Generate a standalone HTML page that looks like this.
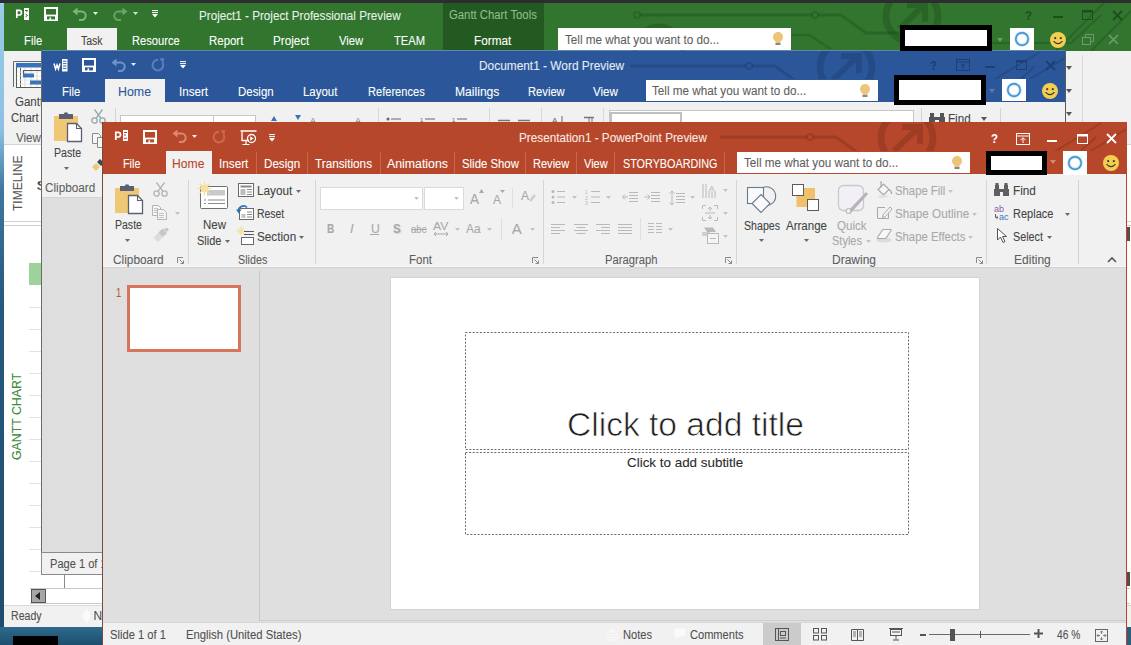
<!DOCTYPE html>
<html><head><meta charset="utf-8"><title>Office</title>
<style>
*{margin:0;padding:0;box-sizing:border-box}
html,body{width:1131px;height:645px;overflow:hidden;background:#2a5877;font-family:"Liberation Sans", sans-serif;font-size:12px;color:#444}
.a{position:absolute;display:block}
.t{position:absolute;white-space:nowrap;line-height:1;-webkit-text-stroke:0.08px currentColor}
</style></head><body>
<div class="a" style="left:0px;top:0px;width:1131px;height:645px;background:linear-gradient(180deg,#9ccbe9 0,#8cc0e3 130px,#3d77a0 190px,#28597e 300px,#1f4c6e 645px);"></div>
<div class="a" style="left:0px;top:0px;width:1131px;height:3px;background:#2d2d30;"></div>
<div class="a" style="left:0px;top:627px;width:103px;height:18px;background:linear-gradient(180deg,#2e6a8c,#1d4f6e);"></div>
<div class="a" style="left:13px;top:636px;width:45px;height:9px;background:#000;"></div>
<div class="a" style="left:1127px;top:627px;width:4px;height:18px;background:#2a5f80;"></div>
<div class="a" style="left:4px;top:3px;width:1127px;height:624px;background:#ffffff;"></div>
<div class="a" style="left:4px;top:3px;width:1127px;height:48px;background:#31752f;"></div>
<div class="a" style="left:443px;top:3px;width:101px;height:48px;background:#235a22;"></div>
<div class="a" style="left:4px;top:51px;width:1127px;height:94px;background:#f1f1f1;"></div>
<div class="a" style="left:4px;top:144px;width:1127px;height:1px;background:#d4d4d4;"></div>
<div class="a" style="left:67px;top:28px;width:50px;height:23px;background:#f1f1f1;"></div>
<svg class="a" style="left:13px;top:61px;" width="29" height="27" viewBox="0 0 29 27"><path d="M0.5 26V0.5H29" fill="none" stroke="#6a6a6a"/><rect x="3.5" y="2.5" width="26" height="24" fill="#fff" stroke="#5a5a5a"/><rect x="3" y="2" width="27" height="4.5" fill="#3a73b8"/><path d="M7.5 7V26M12 7V26M18 7V26M24 7V26" stroke="#d8d8d8"/><path d="M3.5 7V26M7.5 7V26" stroke="#5a5a5a"/><path d="M4 11H29M4 15H29M4 19H29M4 23H29" stroke="#e2e2e2"/><path d="M10.5 13V9.5H29" fill="none" stroke="#5a5a5a" stroke-width="1.2"/><rect x="10" y="12.5" width="11" height="4" fill="#3a73b8"/><rect x="17" y="19.5" width="12" height="4" fill="#3a73b8"/></svg>
<span class="t" style="left:14.70px;top:96.00px;font-size:12px;color:#444444;transform-origin:0 0;transform:scaleX(0.9595);">Gantt</span>
<span class="t" style="left:10.50px;top:111.80px;font-size:12px;color:#444444;transform-origin:0 0;transform:scaleX(0.9430);">Chart</span>
<span class="t" style="left:16.30px;top:131.50px;font-size:12px;color:#5e5e5e;transform-origin:0 0;transform:scaleX(0.9645);">View</span>
<div class="a" style="left:1082px;top:55px;width:1px;height:86px;background:#d8d8d8;"></div>
<svg class="a" style="left:1066px;top:66px;" width="6" height="4" viewBox="0 0 6 4"><path d="M0 0H6L3.0 4Z" fill="#555"/></svg>
<svg class="a" style="left:1066px;top:89px;" width="6" height="4" viewBox="0 0 6 4"><path d="M0 0H6L3.0 4Z" fill="#555"/></svg>
<svg class="a" style="left:1066px;top:112px;" width="6" height="4" viewBox="0 0 6 4"><path d="M0 0H6L3.0 4Z" fill="#555"/></svg>
<div class="a" style="left:4px;top:145px;width:1127px;height:77px;background:#ffffff;"></div>
<span class="t" style="left:10.50px;top:210.70px;font-size:13px;color:#555;transform-origin:0 0;transform:rotate(-90deg) scaleX(0.9240);">TIMELINE</span>
<span class="t" style="left:36.00px;top:180.00px;font-size:12px;color:#444444;transform-origin:0 0;transform:scaleX(1.7500);">S</span>
<div class="a" style="left:4px;top:221px;width:1127px;height:1px;background:#d0d0d0;"></div>
<div class="a" style="left:4px;top:225px;width:1127px;height:1px;background:#d0d0d0;"></div>
<div class="a" style="left:4px;top:226px;width:1127px;height:379px;background:#ffffff;"></div>
<div class="a" style="left:29px;top:263px;width:14px;height:22px;background:#9dd29b;"></div>
<div class="a" style="left:29px;top:307px;width:13px;height:1px;background:#e2e2e2;"></div>
<div class="a" style="left:29px;top:329px;width:13px;height:1px;background:#e2e2e2;"></div>
<div class="a" style="left:29px;top:351px;width:13px;height:1px;background:#e2e2e2;"></div>
<div class="a" style="left:29px;top:373px;width:13px;height:1px;background:#e2e2e2;"></div>
<div class="a" style="left:29px;top:395px;width:13px;height:1px;background:#e2e2e2;"></div>
<div class="a" style="left:29px;top:417px;width:13px;height:1px;background:#e2e2e2;"></div>
<div class="a" style="left:29px;top:439px;width:13px;height:1px;background:#e2e2e2;"></div>
<div class="a" style="left:29px;top:461px;width:13px;height:1px;background:#e2e2e2;"></div>
<div class="a" style="left:29px;top:483px;width:13px;height:1px;background:#e2e2e2;"></div>
<div class="a" style="left:29px;top:505px;width:13px;height:1px;background:#e2e2e2;"></div>
<div class="a" style="left:29px;top:527px;width:13px;height:1px;background:#e2e2e2;"></div>
<div class="a" style="left:29px;top:549px;width:13px;height:1px;background:#e2e2e2;"></div>
<div class="a" style="left:29px;top:571px;width:13px;height:1px;background:#e2e2e2;"></div>
<span class="t" style="left:11.00px;top:460.00px;font-size:12px;color:#3d8a3b;transform-origin:0 0;transform:rotate(-90deg) scaleX(1.0258);">GANTT CHART</span>
<div class="a" style="left:64px;top:574px;width:1px;height:14px;background:#8a8a8a;"></div>
<div class="a" style="left:30px;top:588px;width:1100px;height:16px;background:#ffffff;border-top:1px solid #c9c9c9;border-bottom:1px solid #c9c9c9"></div>
<div class="a" style="left:31px;top:589px;width:15px;height:14px;background:#a6a6a6;border:1px solid #555"></div>
<svg class="a" style="left:35px;top:592px;" width="6" height="8" viewBox="0 0 6 8"><path d="M5 0V8L0 4Z" fill="#222"/></svg>
<div class="a" style="left:4px;top:605px;width:1127px;height:22px;background:#f1f1f1;"></div>
<div class="a" style="left:4px;top:605px;width:1127px;height:1px;background:#d9d9d9;"></div>
<span class="t" style="left:11.40px;top:610.20px;font-size:12px;color:#505050;transform-origin:0 0;transform:scaleX(0.8822);">Ready</span>
<span class="t" style="left:93.60px;top:610.20px;font-size:12px;color:#505050;">N</span>
<svg class="a" style="left:80px;top:607px;" width="12" height="18" viewBox="0 0 12 18"><path d="M7 1L2 9L7 17L11 9Z" fill="#fafafa"/></svg>
<div class="a" style="left:41px;top:50px;width:1025px;height:503px;background:#dedede;"></div>
<div class="a" style="left:41px;top:50px;width:1px;height:525px;background:#6b6b6b;"></div>
<div class="a" style="left:1065px;top:50px;width:1px;height:95px;background:#5a5a5a;"></div>
<div class="a" style="left:41px;top:552px;width:70px;height:23px;background:#f1f1f1;border:1px solid #8a8a8a;border-right:none"></div>
<span class="t" style="left:49.60px;top:557.60px;font-size:12px;color:#505050;transform-origin:0 0;transform:scaleX(0.9221);">Page 1 of 1</span>
<div class="a" style="left:42px;top:50px;width:1023px;height:52px;background:#2b579a;"></div>
<div class="a" style="left:42px;top:50px;width:1023px;height:1px;background:#5f8aa8;"></div>
<div class="a" style="left:42px;top:102px;width:1023px;height:95px;background:#f1f1f1;"></div>
<div class="a" style="left:105px;top:79px;width:60px;height:23px;background:#f1f1f1;"></div>
<div class="a" style="left:42px;top:197px;width:61px;height:1px;background:#d4d4d4;"></div>
<svg class="a" style="left:54px;top:112px;" width="29" height="31" viewBox="0 0 29 31"><rect x="0" y="4" width="24" height="25" fill="#f0c772"/><rect x="5" y="2" width="14" height="5" fill="#5b6074"/><circle cx="12" cy="2.5" r="2.3" fill="#5b6074"/><path d="M13.5 11.5H22.5L27.5 16.5V29.5H13.5Z" fill="#fff" stroke="#5b6074" stroke-width="1.3"/><path d="M22.5 11.5V16.5H27.5" fill="none" stroke="#5b6074" stroke-width="1.1"/></svg>
<span class="t" style="left:53.60px;top:146.70px;font-size:12px;color:#444444;transform-origin:0 0;transform:scaleX(0.8835);">Paste</span>
<svg class="a" style="left:64px;top:167px;" width="5" height="3" viewBox="0 0 5 3"><path d="M0 0H5L2.5 3Z" fill="#6a6a6a"/></svg>
<span class="t" style="left:45.40px;top:182.00px;font-size:12px;color:#5e5e5e;transform-origin:0 0;transform:scaleX(0.9785);">Clipboard</span>
<svg class="a" style="left:91px;top:109px;" width="15" height="15" viewBox="0 0 15 15"><g fill="none" stroke="#98a8a8" stroke-width="1.3"><circle cx="3.5" cy="11.5" r="2.7"/><circle cx="11.5" cy="11.5" r="2.7"/><path d="M5 9.3L11.5 0.5M10 9.3L3.5 0.5"/></g></svg>
<svg class="a" style="left:92px;top:133px;" width="15" height="15" viewBox="0 0 15 15"><g fill="#f6f6f6" stroke="#8a8a8a" stroke-width="1"><path d="M0.5 0.5H6.5L8.5 2.5V10.5H0.5Z"/><path d="M5.5 4.5H11.5L14.5 7.5V14.5H5.5Z"/></g></svg>
<svg class="a" style="left:92px;top:159px;" width="12" height="12" viewBox="0 0 12 12"><path d="M0 8L4 4L8 8L4 12Z" fill="#f0c772"/><path d="M5 3L8 0L12 4L9 7Z" fill="#444"/></svg>
<div class="a" style="left:115px;top:108px;width:1px;height:14px;background:#d4d4d4;"></div>
<div class="a" style="left:120px;top:115px;width:94px;height:10px;background:#fff;border:1px solid #c6c6c6"></div>
<div class="a" style="left:213px;top:115px;width:43px;height:10px;background:#fff;border:1px solid #c6c6c6"></div>
<svg class="a" style="left:268px;top:114px;" width="40" height="8" viewBox="0 0 40 8"><path d="M3 7L6 2L9 7Z" fill="#3a73b8"/><path d="M27 1H33L30 6Z" fill="#3a73b8"/></svg>
<svg class="a" style="left:310px;top:116px;" width="12" height="8" viewBox="0 0 12 8"><text x="0" y="8" font-size="9" fill="#777" font-family="Liberation Sans">A</text></svg>
<svg class="a" style="left:355px;top:116px;" width="12" height="8" viewBox="0 0 12 8"><text x="0" y="8" font-size="9" fill="#777" font-family="Liberation Sans">A</text></svg>
<div class="a" style="left:378px;top:108px;width:1px;height:14px;background:#d8d8d8;"></div>
<div class="a" style="left:489px;top:108px;width:1px;height:14px;background:#d8d8d8;"></div>
<div class="a" style="left:541px;top:108px;width:1px;height:14px;background:#d8d8d8;"></div>
<div class="a" style="left:603px;top:108px;width:1px;height:14px;background:#d8d8d8;"></div>
<svg class="a" style="left:386px;top:117px;" width="16" height="5" viewBox="0 0 16 5"><path d="M5 2H15" stroke="#666"/><circle cx="2" cy="2" r="1.5" fill="#666"/></svg>
<svg class="a" style="left:420px;top:116px;" width="16" height="6" viewBox="0 0 16 6"><path d="M5 3H15" stroke="#666"/><text x="0" y="6" font-size="6" fill="#666" font-family="Liberation Sans">1</text></svg>
<svg class="a" style="left:452px;top:116px;" width="16" height="6" viewBox="0 0 16 6"><path d="M5 3H15" stroke="#666"/><text x="0" y="6" font-size="6" fill="#666" font-family="Liberation Sans">1</text></svg>
<svg class="a" style="left:497px;top:119px;" width="40" height="4" viewBox="0 0 40 4"><path d="M1 1.5H13M21 1.5H33" stroke="#777" stroke-width="1.5"/></svg>
<svg class="a" style="left:552px;top:115px;" width="12" height="8" viewBox="0 0 12 8"><text x="0" y="8" font-size="8" fill="#666" font-family="Liberation Sans">A</text><path d="M10 1V8" stroke="#666"/></svg>
<svg class="a" style="left:583px;top:116px;" width="12" height="7" viewBox="0 0 12 7"><path d="M1 1.5H11" stroke="#777" stroke-width="1.5"/><path d="M6 1V7M9 1V7" stroke="#777"/></svg>
<svg class="a" style="left:900px;top:113px;" width="9" height="6" viewBox="0 0 9 6"><path d="M1 5L4.5 1L8 5Z" fill="#888"/></svg>
<div class="a" style="left:609px;top:110px;width:305px;height:14px;background:#fff;border:1px solid #c6c6c6"></div>
<div class="a" style="left:610px;top:112px;width:72px;height:12px;background:#fff;border:2px solid #c0c0c0"></div>
<div class="a" style="left:921px;top:108px;width:1px;height:14px;background:#d4d4d4;"></div>
<svg class="a" style="left:929px;top:112px;" width="17" height="11" viewBox="0 0 17 11"><g fill="#555"><rect x="0" y="5" width="6" height="6"/><rect x="10" y="5" width="6" height="6"/><rect x="1" y="1" width="4" height="5"/><rect x="11" y="1" width="4" height="5"/><rect x="5" y="5" width="6" height="3"/></g></svg>
<span class="t" style="left:948.00px;top:113.00px;font-size:12px;color:#444444;transform-origin:0 0;transform:scaleX(0.9704);">Find</span>
<div class="a" style="left:1000px;top:108px;width:1px;height:14px;background:#d4d4d4;"></div>
<svg class="a" style="left:981px;top:117px;" width="6" height="4" viewBox="0 0 6 4"><path d="M0 0H6L3.0 4Z" fill="#555"/></svg>
<div class="a" style="left:102px;top:122px;width:1025px;height:523px;background:#dfdfdf;"></div>
<div class="a" style="left:102px;top:122px;width:1px;height:523px;background:#7a4a3c;"></div>
<div class="a" style="left:1126px;top:122px;width:1px;height:523px;background:#b7472a;"></div>
<div class="a" style="left:103px;top:122px;width:1023px;height:52px;background:#b7472a;"></div>
<div class="a" style="left:103px;top:174px;width:1023px;height:93px;background:#f1f1f1;"></div>
<div class="a" style="left:103px;top:266px;width:1023px;height:1px;background:#f8f8f8;"></div>
<div class="a" style="left:103px;top:267px;width:1023px;height:1px;background:#d2d2d2;"></div>
<div class="a" style="left:166px;top:151px;width:46px;height:23px;background:#f1f1f1;"></div>
<span class="t" style="left:199.00px;top:9.50px;font-size:12px;color:#eaf2ea;transform-origin:0 0;transform:scaleX(0.9723);">Project1 - Project Professional Preview</span>
<span class="t" style="left:449.00px;top:9.00px;font-size:12px;color:#8fbf8c;transform-origin:0 0;transform:scaleX(0.9424);">Gantt Chart Tools</span>
<span class="t" style="left:24.00px;top:34.50px;font-size:12px;color:#ffffff;transform-origin:0 0;transform:scaleX(0.9409);">File</span>
<span class="t" style="left:80.50px;top:34.50px;font-size:12px;color:#444444;transform-origin:0 0;transform:scaleX(0.8764);">Task</span>
<span class="t" style="left:132.00px;top:34.50px;font-size:12px;color:#ffffff;transform-origin:0 0;transform:scaleX(0.9287);">Resource</span>
<span class="t" style="left:209.00px;top:34.50px;font-size:12px;color:#ffffff;transform-origin:0 0;transform:scaleX(0.9541);">Report</span>
<span class="t" style="left:273.00px;top:34.50px;font-size:12px;color:#ffffff;transform-origin:0 0;transform:scaleX(0.9733);">Project</span>
<span class="t" style="left:339.00px;top:34.50px;font-size:12px;color:#ffffff;transform-origin:0 0;transform:scaleX(0.9377);">View</span>
<span class="t" style="left:393.50px;top:34.50px;font-size:12px;color:#ffffff;transform-origin:0 0;transform:scaleX(0.9329);">TEAM</span>
<span class="t" style="left:474.00px;top:34.50px;font-size:12px;color:#ffffff;transform-origin:0 0;transform:scaleX(0.9827);">Format</span>
<span class="t" style="left:479.00px;top:59.50px;font-size:12px;color:#e6ecf5;transform-origin:0 0;transform:scaleX(0.9903);">Document1 - Word Preview</span>
<span class="t" style="left:61.80px;top:86.00px;font-size:12px;color:#ffffff;transform-origin:0 0;transform:scaleX(0.9409);">File</span>
<span class="t" style="left:118.00px;top:86.00px;font-size:12px;color:#2b579a;transform-origin:0 0;transform:scaleX(1.0329);">Home</span>
<span class="t" style="left:179.03px;top:86.00px;font-size:12px;color:#ffffff;transform-origin:0 0;transform:scaleX(0.9671);">Insert</span>
<span class="t" style="left:238.40px;top:86.00px;font-size:12px;color:#ffffff;transform-origin:0 0;transform:scaleX(0.9542);">Design</span>
<span class="t" style="left:303.00px;top:86.00px;font-size:12px;color:#ffffff;transform-origin:0 0;transform:scaleX(0.9538);">Layout</span>
<span class="t" style="left:368.30px;top:86.00px;font-size:12px;color:#ffffff;transform-origin:0 0;transform:scaleX(0.9240);">References</span>
<span class="t" style="left:454.60px;top:86.00px;font-size:12px;color:#ffffff;transform-origin:0 0;transform:scaleX(1.0087);">Mailings</span>
<span class="t" style="left:528.00px;top:86.00px;font-size:12px;color:#ffffff;transform-origin:0 0;transform:scaleX(0.9325);">Review</span>
<span class="t" style="left:592.70px;top:86.00px;font-size:12px;color:#ffffff;transform-origin:0 0;transform:scaleX(0.9645);">View</span>
<span class="t" style="left:518.80px;top:131.50px;font-size:12px;color:#fbeae5;transform-origin:0 0;transform:scaleX(0.9780);">Presentation1 - PowerPoint Preview</span>
<span class="t" style="left:123.30px;top:158.30px;font-size:12px;color:#ffffff;transform-origin:0 0;transform:scaleX(0.9002);">File</span>
<span class="t" style="left:172.00px;top:158.30px;font-size:12px;color:#b7472a;transform-origin:0 0;transform:scaleX(1.0144);">Home</span>
<span class="t" style="left:219.02px;top:158.30px;font-size:12px;color:#ffffff;transform-origin:0 0;transform:scaleX(0.9772);">Insert</span>
<span class="t" style="left:264.00px;top:158.30px;font-size:12px;color:#ffffff;transform-origin:0 0;transform:scaleX(0.9678);">Design</span>
<span class="t" style="left:315.00px;top:158.30px;font-size:12px;color:#ffffff;transform-origin:0 0;transform:scaleX(0.9787);">Transitions</span>
<span class="t" style="left:387.00px;top:158.30px;font-size:12px;color:#ffffff;transform-origin:0 0;transform:scaleX(1.0259);">Animations</span>
<span class="t" style="left:461.60px;top:158.30px;font-size:12px;color:#ffffff;transform-origin:0 0;transform:scaleX(0.9475);">Slide Show</span>
<span class="t" style="left:533.00px;top:158.30px;font-size:12px;color:#ffffff;transform-origin:0 0;transform:scaleX(0.9199);">Review</span>
<span class="t" style="left:584.00px;top:158.30px;font-size:12px;color:#ffffff;transform-origin:0 0;transform:scaleX(0.9186);">View</span>
<span class="t" style="left:622.50px;top:158.30px;font-size:12px;color:#ffffff;transform-origin:0 0;transform:scaleX(0.9008);">STORYBOARDING</span>
<div class="a" style="left:256px;top:152px;width:1px;height:22px;background:rgba(255,255,255,0.18);"></div>
<div class="a" style="left:307px;top:152px;width:1px;height:22px;background:rgba(255,255,255,0.18);"></div>
<div class="a" style="left:380px;top:152px;width:1px;height:22px;background:rgba(255,255,255,0.18);"></div>
<div class="a" style="left:454px;top:152px;width:1px;height:22px;background:rgba(255,255,255,0.18);"></div>
<div class="a" style="left:525px;top:152px;width:1px;height:22px;background:rgba(255,255,255,0.18);"></div>
<div class="a" style="left:576px;top:152px;width:1px;height:22px;background:rgba(255,255,255,0.18);"></div>
<div class="a" style="left:614px;top:152px;width:1px;height:22px;background:rgba(255,255,255,0.18);"></div>
<div class="a" style="left:724px;top:152px;width:1px;height:22px;background:rgba(255,255,255,0.18);"></div>
<svg class="a" style="left:544px;top:3px;" width="587" height="48" viewBox="0 0 587 48"><g transform="translate(0 0)"><g fill="none" stroke="rgba(0,0,0,0.13)"><path d="M96 12H268M274 12H297L322 30H437" stroke-width="3"/><circle cx="115" cy="47" r="24" stroke-width="5"/><path d="M243 32H265L287 46" stroke-width="2.5"/><circle cx="93" cy="12" r="3" stroke-width="2"/><circle cx="271" cy="12" r="3" stroke-width="2"/><circle cx="368" cy="13" r="26" stroke-width="7"/><path d="M355 26L379 3M363 2H381V19" stroke-width="6"/><path d="M512 48L562 -2M547 48L597 -2" stroke-width="2"/><path d="M447 40H527L557 12" stroke-width="2"/></g></g></svg>
<svg class="a" style="left:630px;top:51px;" width="435" height="28" viewBox="0 0 435 28"><g transform="translate(0 3)"><g fill="none" stroke="rgba(0,0,0,0.13)"><path d="M-56 12H116M122 12H145L170 30H285" stroke-width="3"/><circle cx="-37" cy="47" r="24" stroke-width="5"/><path d="M91 32H113L135 46" stroke-width="2.5"/><circle cx="-59" cy="12" r="3" stroke-width="2"/><circle cx="119" cy="12" r="3" stroke-width="2"/><circle cx="216" cy="13" r="26" stroke-width="7"/><path d="M203 26L227 3M211 2H229V19" stroke-width="6"/><path d="M360 28L410 -2M395 28L445 -2" stroke-width="2"/><path d="M295 40H375L405 12" stroke-width="2"/></g></g></svg>
<svg class="a" style="left:878px;top:79px;" width="187" height="23" viewBox="0 0 187 23"><g transform="translate(0 0)"><g fill="none" stroke="rgba(0,0,0,0.0)"><path d="M-304 12H-132M-126 12H-103L-78 30H37" stroke-width="3"/><circle cx="-285" cy="47" r="24" stroke-width="5"/><path d="M-157 32H-135L-113 46" stroke-width="2.5"/><circle cx="-307" cy="12" r="3" stroke-width="2"/><circle cx="-129" cy="12" r="3" stroke-width="2"/><circle cx="-32" cy="13" r="26" stroke-width="7"/><path d="M-45 26L-21 3M-37 2H-19V19" stroke-width="6"/><path d="M112 23L162 -2M147 23L197 -2" stroke-width="2"/><path d="M47 40H127L157 12" stroke-width="2"/></g></g></svg>
<svg class="a" style="left:720px;top:122px;" width="406" height="29" viewBox="0 0 406 29"><g transform="translate(0 3)"><g fill="none" stroke="rgba(0,0,0,0.13)"><path d="M-85 12H87M93 12H116L141 30H256" stroke-width="3"/><circle cx="-66" cy="47" r="24" stroke-width="5"/><path d="M62 32H84L106 46" stroke-width="2.5"/><circle cx="-88" cy="12" r="3" stroke-width="2"/><circle cx="90" cy="12" r="3" stroke-width="2"/><circle cx="187" cy="13" r="26" stroke-width="7"/><path d="M174 26L198 3M182 2H200V19" stroke-width="6"/><path d="M331 29L381 -2M366 29L416 -2" stroke-width="2"/><path d="M266 40H346L376 12" stroke-width="2"/></g></g></svg>
<svg class="a" style="left:15px;top:8px;" width="15" height="14" viewBox="0 0 15 14"><path d="M1.8 10V2.4H4.2A2.3 2.3 0 0 1 4.2 7H1.8" fill="none" stroke="#ffffff" stroke-width="1.7"/><rect x="9" y="0" width="5" height="12" fill="#ffffff"/><path d="M10 2.5H12.5L11.5 4M10.5 6L12.5 7.5L10.5 9" fill="none" stroke="#31752f" stroke-width="1"/></svg>
<svg class="a" style="left:44px;top:7px;" width="14" height="14" viewBox="0 0 14 14"><rect x="0" y="0" width="14" height="14" fill="#ffffff"/><rect x="2" y="2" width="10" height="5.6" fill="#31752f"/><rect x="3" y="9.4" width="8" height="3" fill="#31752f"/><rect x="5.5" y="10.4" width="1.6" height="2.5999999999999996" fill="#ffffff"/></svg>
<svg class="a" style="left:72px;top:8px;" width="15" height="13" viewBox="0 0 15 13"><path d="M5 3.5H9.5a4.2 4.2 0 0 1 0 8.4H7" fill="none" stroke="#7fb57d" stroke-width="2" opacity="1"/><path d="M0.5 3.5L5.5 -0.5V7.5Z" fill="#7fb57d" opacity="1"/></svg>
<svg class="a" style="left:93px;top:12px;" width="5" height="3" viewBox="0 0 5 3"><path d="M0 0H5L2.5 3Z" fill="#e8f0e8"/></svg>
<svg class="a" style="left:113px;top:8px;" width="15" height="13" viewBox="0 0 15 13"><path d="M10 3.5H5.5a4.2 4.2 0 0 0 0 8.4H8" fill="none" stroke="#6aa468" stroke-width="2" opacity="1"/><path d="M14.5 3.5L9.5 -0.5V7.5Z" fill="#6aa468" opacity="1"/></svg>
<svg class="a" style="left:133px;top:12px;" width="5" height="3" viewBox="0 0 5 3"><path d="M0 0H5L2.5 3Z" fill="#d0e4cf"/></svg>
<svg class="a" style="left:152px;top:10px;" width="6" height="8" viewBox="0 0 6 8"><path d="M0 0.6H6M0 2.6H6" stroke="#ffffff" stroke-width="1"/><path d="M0 4H6L3 7.5Z" fill="#ffffff"/></svg>
<svg class="a" style="left:53px;top:59px;" width="15" height="14" viewBox="0 0 15 14"><path d="M1 4.5L2.6 10L4 6L5.4 10L7 4.5" fill="none" stroke="#ffffff" stroke-width="1.5"/><rect x="9" y="0" width="5.5" height="12.5" fill="#ffffff"/><path d="M10 2.2H13.5M10 4.6H13.5M10 7H13.5M10 9.4H13.5" stroke="#2b579a" stroke-width="0.9"/></svg>
<svg class="a" style="left:82px;top:58px;" width="14" height="14" viewBox="0 0 14 14"><rect x="0" y="0" width="14" height="14" fill="#ffffff"/><rect x="2" y="2" width="10" height="5.6" fill="#2b579a"/><rect x="3" y="9.4" width="8" height="3" fill="#2b579a"/><rect x="5.5" y="10.4" width="1.6" height="2.5999999999999996" fill="#ffffff"/></svg>
<svg class="a" style="left:111px;top:59px;" width="15" height="13" viewBox="0 0 15 13"><path d="M5 3.5H9.5a4.2 4.2 0 0 1 0 8.4H7" fill="none" stroke="#6f93c8" stroke-width="2" opacity="1"/><path d="M0.5 3.5L5.5 -0.5V7.5Z" fill="#6f93c8" opacity="1"/></svg>
<svg class="a" style="left:131px;top:63px;" width="5" height="3" viewBox="0 0 5 3"><path d="M0 0H5L2.5 3Z" fill="#e6ecf5"/></svg>
<svg class="a" style="left:151px;top:58px;" width="15" height="14" viewBox="0 0 15 14"><path d="M7 1.8A5.3 5.3 0 1 0 11.6 4.6" fill="none" stroke="#5b80b8" stroke-width="2" opacity="1"/><path d="M8.5 0L13.5 0.5L12 5.5Z" fill="#5b80b8" opacity="1"/></svg>
<svg class="a" style="left:180px;top:61px;" width="6" height="8" viewBox="0 0 6 8"><path d="M0 0.6H6M0 2.6H6" stroke="#ffffff" stroke-width="1"/><path d="M0 4H6L3 7.5Z" fill="#ffffff"/></svg>
<svg class="a" style="left:114px;top:130px;" width="15" height="14" viewBox="0 0 15 14"><path d="M1.8 10V2.4H4.2A2.3 2.3 0 0 1 4.2 7H1.8" fill="none" stroke="#ffffff" stroke-width="1.7"/><rect x="9" y="0" width="5" height="11" fill="#ffffff"/><path d="M10 2.5H13M10 5H12M10 8.2H13" stroke="#b7472a" stroke-width="1.1"/></svg>
<svg class="a" style="left:143px;top:130px;" width="14" height="14" viewBox="0 0 14 14"><rect x="0" y="0" width="14" height="14" fill="#ffffff"/><rect x="2" y="2" width="10" height="5.6" fill="#b7472a"/><rect x="3" y="9.4" width="8" height="3" fill="#b7472a"/><rect x="5.5" y="10.4" width="1.6" height="2.5999999999999996" fill="#ffffff"/></svg>
<svg class="a" style="left:172px;top:130px;" width="15" height="13" viewBox="0 0 15 13"><path d="M5 3.5H9.5a4.2 4.2 0 0 1 0 8.4H7" fill="none" stroke="#d98a76" stroke-width="2" opacity="1"/><path d="M0.5 3.5L5.5 -0.5V7.5Z" fill="#d98a76" opacity="1"/></svg>
<svg class="a" style="left:192px;top:135px;" width="5" height="3" viewBox="0 0 5 3"><path d="M0 0H5L2.5 3Z" fill="#fbeae5"/></svg>
<svg class="a" style="left:212px;top:130px;" width="15" height="14" viewBox="0 0 15 14"><path d="M7 1.8A5.3 5.3 0 1 0 11.6 4.6" fill="none" stroke="#c96a52" stroke-width="2" opacity="1"/><path d="M8.5 0L13.5 0.5L12 5.5Z" fill="#c96a52" opacity="1"/></svg>
<svg class="a" style="left:240px;top:130px;" width="17" height="16" viewBox="0 0 17 16"><path d="M0.5 1H16.5" stroke="#fff" stroke-width="1.5"/><path d="M2 1.5V10.5H9" fill="none" stroke="#fff" stroke-width="1.3"/><circle cx="11.5" cy="8.5" r="4" fill="none" stroke="#fff" stroke-width="1.3"/><path d="M10.2 6.3V10.7L13.5 8.5Z" fill="#fff"/><path d="M6 11V14M2.5 14.5H9.5" stroke="#fff" stroke-width="1.2"/></svg>
<svg class="a" style="left:268.5px;top:134px;" width="6" height="8" viewBox="0 0 6 8"><path d="M0 0.6H6M0 2.6H6" stroke="#ffffff" stroke-width="1"/><path d="M0 4H6L3 7.5Z" fill="#ffffff"/></svg>
<div class="a" style="left:558px;top:28px;width:233px;height:22px;background:#ffffff;"></div>
<span class="t" style="left:565.00px;top:33.50px;font-size:12px;color:#5e5e5e;transform-origin:0 0;transform:scaleX(0.9763);">Tell me what you want to do...</span>
<svg class="a" style="left:772px;top:31px;" width="12" height="16" viewBox="0 0 12 16"><circle cx="6" cy="6" r="5" fill="#ecc47a"/><path d="M3.5 9.5h5v2.5h-5z" fill="#ecc47a"/><path d="M3.5 13h5" stroke="#555" stroke-width="1.4"/></svg>
<div class="a" style="left:900px;top:25px;width:92px;height:26px;background:#000000;"></div>
<div class="a" style="left:905px;top:30px;width:82px;height:16px;background:#ffffff;"></div>
<svg class="a" style="left:997px;top:38px;" width="6" height="4" viewBox="0 0 6 4"><path d="M0 0H6L3.0 4Z" fill="#6a9a68"/></svg>
<div class="a" style="left:1010px;top:28px;width:24px;height:22px;background:#ffffff;"></div>
<svg class="a" style="left:1010px;top:28px;" width="24" height="22" viewBox="0 0 24 22"><circle cx="12.0" cy="11.0" r="6.2" fill="none" stroke="#b8def5" stroke-width="3.2"/><circle cx="12.0" cy="11.0" r="6.2" fill="none" stroke="#3b8fcf" stroke-width="1.4"/></svg>
<svg class="a" style="left:1049px;top:31px;" width="18" height="18" viewBox="0 0 18 18"><circle cx="9" cy="9" r="8" fill="#f4cf4f"/><circle cx="6.2" cy="7.2" r="1.1" fill="#3b3b3b"/><circle cx="11.8" cy="7.2" r="1.1" fill="#3b3b3b"/><path d="M4.5 10.2Q9 15.2 13.5 10.2" fill="none" stroke="#3b3b3b" stroke-width="1.2"/></svg>
<span class="t" style="left:1024.50px;top:8.50px;font-size:13px;color:#1f4d1e;font-weight:bold;transform-origin:0 0;transform:scaleX(0.8750);">?</span>
<div class="a" style="left:1053px;top:16px;width:10px;height:2px;background:#1f4d1e;"></div>
<svg class="a" style="left:1082px;top:10px;" width="11" height="10" viewBox="0 0 11 10"><rect x="0.5" y="0.5" width="10" height="9" fill="none" stroke="#1f4d1e"/><path d="M0.5 1.5H10.5" stroke="#1f4d1e" stroke-width="2"/></svg>
<svg class="a" style="left:1112px;top:9.5px;" width="11" height="11" viewBox="0 0 11 11"><path d="M1 1L10 10M10 1L1 10" stroke="#1f4d1e" stroke-width="1.8"/></svg>
<svg class="a" style="left:1082px;top:34px;" width="12" height="11" viewBox="0 0 12 11"><rect x="0.5" y="3.5" width="8" height="7" fill="none" stroke="#6f9c6d"/><path d="M3.5 3.5V0.5H11.5V7.5H8.5" fill="none" stroke="#6f9c6d"/></svg>
<svg class="a" style="left:1108px;top:34px;" width="11" height="11" viewBox="0 0 11 11"><path d="M1 1L10 10M10 1L1 10" stroke="#6f9c6d" stroke-width="1.6"/></svg>
<div class="a" style="left:646px;top:80px;width:232px;height:21px;background:#ffffff;"></div>
<span class="t" style="left:652.00px;top:84.50px;font-size:12px;color:#5e5e5e;transform-origin:0 0;transform:scaleX(0.9763);">Tell me what you want to do...</span>
<svg class="a" style="left:859px;top:83px;" width="12" height="16" viewBox="0 0 12 16"><circle cx="6" cy="6" r="5" fill="#ecc47a"/><path d="M3.5 9.5h5v2.5h-5z" fill="#ecc47a"/><path d="M3.5 13h5" stroke="#555" stroke-width="1.4"/></svg>
<div class="a" style="left:894px;top:75px;width:92px;height:30px;background:#000000;"></div>
<div class="a" style="left:899px;top:80px;width:82px;height:20px;background:#ffffff;"></div>
<svg class="a" style="left:989px;top:89px;" width="6" height="4" viewBox="0 0 6 4"><path d="M0 0H6L3.0 4Z" fill="#5a7db5"/></svg>
<div class="a" style="left:1002px;top:79px;width:24px;height:22px;background:#ffffff;"></div>
<svg class="a" style="left:1002px;top:79px;" width="24" height="22" viewBox="0 0 24 22"><circle cx="12.0" cy="11.0" r="6.2" fill="none" stroke="#b8def5" stroke-width="3.2"/><circle cx="12.0" cy="11.0" r="6.2" fill="none" stroke="#3b8fcf" stroke-width="1.4"/></svg>
<svg class="a" style="left:1041px;top:81.5px;" width="18" height="18" viewBox="0 0 18 18"><circle cx="9" cy="9" r="8" fill="#f4cf4f"/><circle cx="6.2" cy="7.2" r="1.1" fill="#3b3b3b"/><circle cx="11.8" cy="7.2" r="1.1" fill="#3b3b3b"/><path d="M4.5 10.2Q9 15.2 13.5 10.2" fill="none" stroke="#3b3b3b" stroke-width="1.2"/></svg>
<span class="t" style="left:929.50px;top:58.50px;font-size:13px;color:#1e3f73;font-weight:bold;transform-origin:0 0;transform:scaleX(0.8750);">?</span>
<svg class="a" style="left:956px;top:59px;" width="14" height="12" viewBox="0 0 14 12"><rect x="0.5" y="0.5" width="13" height="11" fill="none" stroke="#1e3f73"/><path d="M0.5 3H13.5" stroke="#1e3f73"/><path d="M7 10V5M4.5 7.2L7 4.7L9.5 7.2" fill="none" stroke="#1e3f73"/></svg>
<div class="a" style="left:985px;top:66px;width:10px;height:2px;background:#1e3f73;"></div>
<svg class="a" style="left:1016px;top:60px;" width="11" height="10" viewBox="0 0 11 10"><rect x="0.5" y="0.5" width="10" height="9" fill="none" stroke="#1e3f73"/><path d="M0.5 1.5H10.5" stroke="#1e3f73" stroke-width="2"/></svg>
<svg class="a" style="left:1045px;top:59.5px;" width="11" height="11" viewBox="0 0 11 11"><path d="M1 1L10 10M10 1L1 10" stroke="#1e3f73" stroke-width="1.8"/></svg>
<div class="a" style="left:737px;top:152px;width:233px;height:21px;background:#ffffff;"></div>
<span class="t" style="left:744.00px;top:156.50px;font-size:12px;color:#5e5e5e;transform-origin:0 0;transform:scaleX(0.9763);">Tell me what you want to do...</span>
<svg class="a" style="left:951px;top:155px;" width="12" height="16" viewBox="0 0 12 16"><circle cx="6" cy="6" r="5" fill="#ecc47a"/><path d="M3.5 9.5h5v2.5h-5z" fill="#ecc47a"/><path d="M3.5 13h5" stroke="#555" stroke-width="1.4"/></svg>
<div class="a" style="left:986px;top:151px;width:61px;height:24px;background:#000000;"></div>
<div class="a" style="left:991px;top:156px;width:51px;height:14px;background:#ffffff;"></div>
<svg class="a" style="left:1050px;top:160px;" width="6" height="4" viewBox="0 0 6 4"><path d="M0 0H6L3.0 4Z" fill="#d28a77"/></svg>
<div class="a" style="left:1063px;top:151px;width:24px;height:24px;background:#ffffff;"></div>
<svg class="a" style="left:1063px;top:151px;" width="24" height="24" viewBox="0 0 24 24"><circle cx="12.0" cy="12.0" r="6.2" fill="none" stroke="#b8def5" stroke-width="3.2"/><circle cx="12.0" cy="12.0" r="6.2" fill="none" stroke="#3b8fcf" stroke-width="1.4"/></svg>
<svg class="a" style="left:1102px;top:153.5px;" width="18" height="18" viewBox="0 0 18 18"><circle cx="9" cy="9" r="8" fill="#f4cf4f"/><circle cx="6.2" cy="7.2" r="1.1" fill="#3b3b3b"/><circle cx="11.8" cy="7.2" r="1.1" fill="#3b3b3b"/><path d="M4.5 10.2Q9 15.2 13.5 10.2" fill="none" stroke="#3b3b3b" stroke-width="1.2"/></svg>
<span class="t" style="left:990.50px;top:132.00px;font-size:13px;color:#ffffff;font-weight:bold;transform-origin:0 0;transform:scaleX(0.8750);">?</span>
<svg class="a" style="left:1016px;top:132.5px;" width="14" height="12" viewBox="0 0 14 12"><rect x="0.5" y="0.5" width="13" height="11" fill="none" stroke="#ffffff"/><path d="M0.5 3H13.5" stroke="#ffffff"/><path d="M7 10V5M4.5 7.2L7 4.7L9.5 7.2" fill="none" stroke="#ffffff"/></svg>
<div class="a" style="left:1047px;top:139.5px;width:10px;height:2px;background:#ffffff;"></div>
<svg class="a" style="left:1077px;top:133.5px;" width="11" height="10" viewBox="0 0 11 10"><rect x="0.5" y="0.5" width="10" height="9" fill="none" stroke="#ffffff"/><path d="M0.5 1.5H10.5" stroke="#ffffff" stroke-width="2"/></svg>
<svg class="a" style="left:1106px;top:133.0px;" width="11" height="11" viewBox="0 0 11 11"><path d="M1 1L10 10M10 1L1 10" stroke="#ffffff" stroke-width="1.8"/></svg>
<svg class="a" style="left:115px;top:184px;" width="29" height="31" viewBox="0 0 29 31"><rect x="0" y="4" width="24" height="25" fill="#f0c772"/><rect x="5" y="2" width="14" height="5" fill="#5b6074"/><circle cx="12" cy="2.5" r="2.3" fill="#5b6074"/><path d="M13.5 11.5H22.5L27.5 16.5V29.5H13.5Z" fill="#fff" stroke="#5b6074" stroke-width="1.3"/><path d="M22.5 11.5V16.5H27.5" fill="none" stroke="#5b6074" stroke-width="1.1"/></svg>
<span class="t" style="left:114.60px;top:218.50px;font-size:12px;color:#444444;transform-origin:0 0;transform:scaleX(0.8771);">Paste</span>
<svg class="a" style="left:125px;top:239px;" width="5" height="3" viewBox="0 0 5 3"><path d="M0 0H5L2.5 3Z" fill="#6a6a6a"/></svg>
<svg class="a" style="left:153px;top:182px;" width="15" height="15" viewBox="0 0 15 15"><g fill="none" stroke="#b4b4b4" stroke-width="1.3"><circle cx="3.5" cy="11.5" r="2.7"/><circle cx="11.5" cy="11.5" r="2.7"/><path d="M5 9.3L11.5 0.5M10 9.3L3.5 0.5"/></g></svg>
<svg class="a" style="left:152px;top:205px;" width="15" height="15" viewBox="0 0 15 15"><g fill="#f6f6f6" stroke="#b4b4b4" stroke-width="1"><path d="M0.5 0.5H6.5L8.5 2.5V10.5H0.5Z"/><path d="M5.5 4.5H11.5L14.5 7.5V14.5H5.5Z"/></g><path d="M2 3.5H6M2 5.5H6M2 7.5H5M7 8.5H12M7 10.5H12M7 12.5H12" stroke="#b4b4b4" stroke-width="0.8"/></svg>
<svg class="a" style="left:175px;top:212px;" width="5" height="3" viewBox="0 0 5 3"><path d="M0 0H5L2.5 3Z" fill="#c0c0c0"/></svg>
<svg class="a" style="left:153px;top:228px;" width="16" height="14" viewBox="0 0 16 14"><path d="M0.5 9.5L5.5 4.5L10 9L5 14Z" fill="#dcdcdc"/><path d="M5.5 4.5L9.5 0.5L14 5L10 9Z" fill="#c6c6c6"/><path d="M11 1.5L13.5 -1L16 1.5L13.5 4Z" fill="#c6c6c6"/></svg>
<span class="t" style="left:112.60px;top:254.30px;font-size:12px;color:#5e5e5e;transform-origin:0 0;transform:scaleX(0.9864);">Clipboard</span>
<svg class="a" style="left:177px;top:257px;" width="7" height="7" viewBox="0 0 7 7"><path d="M0.5 6V0.5H6" fill="none" stroke="#8a8a8a"/><path d="M2.5 2.5L6.5 6.5M3.5 6.5H6.5V3.5" fill="none" stroke="#8a8a8a"/></svg>
<div class="a" style="left:188px;top:180px;width:1px;height:84px;background:#d5d5d5;"></div>
<svg class="a" style="left:197px;top:182px;" width="32" height="28" viewBox="0 0 32 28"><rect x="3.5" y="4.5" width="27" height="22" rx="1" fill="#fff" stroke="#6f6f6f"/><rect x="10" y="8" width="18" height="5.5" fill="#c9c9c9"/><path d="M7 18H9M11 18H28M7 21.5H9M11 21.5H28" stroke="#8a8a8a"/></svg>
<svg class="a" style="left:197px;top:181px;" width="15" height="15" viewBox="0 0 15 15"><g stroke="#f6dc98" stroke-width="1.1"><path d="M7.5 0.5V14.5M0.5 7.5H14.5M2.5 2.5L12.5 12.5M12.5 2.5L2.5 12.5"/></g><circle cx="7.5" cy="7.5" r="4" fill="#f8e0a0"/></svg>
<span class="t" style="left:202.70px;top:218.50px;font-size:12px;color:#444444;transform-origin:0 0;transform:scaleX(0.9573);">New</span>
<span class="t" style="left:197.00px;top:234.50px;font-size:12px;color:#444444;transform-origin:0 0;transform:scaleX(0.9108);">Slide</span>
<svg class="a" style="left:225px;top:240px;" width="5" height="3" viewBox="0 0 5 3"><path d="M0 0H5L2.5 3Z" fill="#6a6a6a"/></svg>
<svg class="a" style="left:238px;top:183px;" width="16" height="15" viewBox="0 0 16 15"><rect x="0.5" y="0.5" width="15" height="13" fill="#fff" stroke="#6a6a6a"/><rect x="2.5" y="2.5" width="11" height="2" fill="#888"/><rect x="2.5" y="6" width="5" height="6" fill="#bdbdbd"/><path d="M9 6.5H14M9 9H14M9 11.5H14" stroke="#888"/></svg>
<span class="t" style="left:257.00px;top:185.00px;font-size:12px;color:#444444;transform-origin:0 0;transform:scaleX(0.9811);">Layout</span>
<svg class="a" style="left:296px;top:190px;" width="5" height="3" viewBox="0 0 5 3"><path d="M0 0H5L2.5 3Z" fill="#6a6a6a"/></svg>
<svg class="a" style="left:236px;top:204px;" width="19" height="17" viewBox="0 0 19 17"><rect x="3.5" y="4.5" width="14" height="11" fill="#fff" stroke="#6a6a6a"/><rect x="5.5" y="10" width="4" height="4" fill="#c4c4c4"/><path d="M11 8H16M11 10.5H16M11 13H16" stroke="#8a8a8a"/><path d="M2.5 7.5A5 5 0 0 1 11 3.5" fill="none" stroke="#2a72b8" stroke-width="1.7"/><path d="M0 5.5L2.8 9.5L5.5 5.5Z" fill="#2a72b8"/></svg>
<span class="t" style="left:257.00px;top:207.80px;font-size:12px;color:#444444;transform-origin:0 0;transform:scaleX(0.8684);">Reset</span>
<svg class="a" style="left:236px;top:226px;" width="19" height="19" viewBox="0 0 19 19"><g stroke="#f5d88e" stroke-width="1"><path d="M5 0.5V9.5M0.5 5H9.5M2 2L8 8M8 2L2 8"/></g><circle cx="5" cy="5" r="1.8" fill="#f8e2a6"/><path d="M8 5.5H18M8 8.5H18" stroke="#5a5a5a" stroke-width="1.1"/><rect x="5.5" y="11.5" width="12" height="7" fill="#fff" stroke="#6a6a6a"/></svg>
<span class="t" style="left:257.00px;top:231.00px;font-size:12px;color:#444444;transform-origin:0 0;transform:scaleX(0.9784);">Section</span>
<svg class="a" style="left:299px;top:236px;" width="5" height="3" viewBox="0 0 5 3"><path d="M0 0H5L2.5 3Z" fill="#6a6a6a"/></svg>
<span class="t" style="left:237.70px;top:254.30px;font-size:12px;color:#5e5e5e;transform-origin:0 0;transform:scaleX(0.8965);">Slides</span>
<div class="a" style="left:315px;top:180px;width:1px;height:84px;background:#d5d5d5;"></div>
<div class="a" style="left:320px;top:187px;width:103px;height:23px;background:#ffffff;border:1px solid #dadada"></div>
<div class="a" style="left:424px;top:187px;width:40px;height:23px;background:#ffffff;border:1px solid #dadada"></div>
<svg class="a" style="left:414px;top:197px;" width="5" height="3" viewBox="0 0 5 3"><path d="M0 0H5L2.5 3Z" fill="#c4c4c4"/></svg>
<svg class="a" style="left:454px;top:197px;" width="5" height="3" viewBox="0 0 5 3"><path d="M0 0H5L2.5 3Z" fill="#c4c4c4"/></svg>
<span class="t" style="left:470.00px;top:191.00px;font-size:15px;color:#a8a8a8;transform-origin:0 0;transform:scaleX(0.9000);">A</span>
<svg class="a" style="left:479px;top:189px;" width="5" height="4" viewBox="0 0 5 4"><path d="M0 4H5L2.5 0Z" fill="#a8a8a8"/></svg>
<span class="t" style="left:493.00px;top:193.50px;font-size:12px;color:#a8a8a8;transform-origin:0 0;transform:scaleX(1.0000);">A</span>
<svg class="a" style="left:500px;top:190px;" width="5" height="3" viewBox="0 0 5 3"><path d="M0 0H5L2.5 3Z" fill="#a8a8a8"/></svg>
<div class="a" style="left:512px;top:188px;width:1px;height:20px;background:#dedede;"></div>
<span class="t" style="left:521.00px;top:190.00px;font-size:12px;color:#a8a8a8;transform-origin:0 0;transform:scaleX(1.0000);">A</span>
<svg class="a" style="left:526px;top:192px;" width="10" height="10" viewBox="0 0 10 10"><path d="M3 8L8 2L10 4L5 10Z" fill="#d0d0d0"/></svg>
<span class="t" style="left:326.50px;top:222.90px;font-size:12px;color:#a8a8a8;font-weight:bold;transform-origin:0 0;transform:scaleX(0.8333);">B</span>
<span class="t" style="left:350.00px;top:222.40px;font-size:13px;color:#a8a8a8;font-style:italic;font-family:"Liberation Serif"">I</span>
<span class="t" style="left:370.50px;top:222.90px;font-size:12px;color:#a8a8a8;transform-origin:0 0;transform:scaleX(1.0125);">U</span>
<div class="a" style="left:370px;top:234px;width:9px;height:1px;background:#a8a8a8;"></div>
<span class="t" style="left:393.00px;top:222.40px;font-size:13px;color:#a8a8a8;font-weight:bold;transform-origin:0 0;transform:scaleX(0.8889);text-shadow:1px 1px 1px #d8d8d8">S</span>
<span class="t" style="left:411.00px;top:224.00px;font-size:11px;color:#a8a8a8;transform-origin:0 0;transform:scaleX(0.8774);">abc</span>
<div class="a" style="left:411px;top:229px;width:16px;height:1px;background:#a8a8a8;"></div>
<span class="t" style="left:433.00px;top:220.50px;font-size:11px;color:#a8a8a8;transform-origin:0 0;transform:scaleX(1.1019);">AV</span>
<svg class="a" style="left:433px;top:231px;" width="16" height="6" viewBox="0 0 16 6"><path d="M1 3H15M3 1L1 3L3 5M13 1L15 3L13 5" fill="none" stroke="#a8a8a8"/></svg>
<svg class="a" style="left:455px;top:228px;" width="5" height="3" viewBox="0 0 5 3"><path d="M0 0H5L2.5 3Z" fill="#c4c4c4"/></svg>
<span class="t" style="left:466.00px;top:223.00px;font-size:12px;color:#a8a8a8;transform-origin:0 0;transform:scaleX(0.9997);">Aa</span>
<svg class="a" style="left:487px;top:228px;" width="5" height="3" viewBox="0 0 5 3"><path d="M0 0H5L2.5 3Z" fill="#c4c4c4"/></svg>
<div class="a" style="left:501px;top:218px;width:1px;height:22px;background:#dedede;"></div>
<span class="t" style="left:511.70px;top:221.40px;font-size:15px;color:#a8a8a8;transform-origin:0 0;transform:scaleX(1.0000);">A</span>
<svg class="a" style="left:530px;top:228px;" width="5" height="3" viewBox="0 0 5 3"><path d="M0 0H5L2.5 3Z" fill="#c4c4c4"/></svg>
<span class="t" style="left:409.40px;top:254.00px;font-size:12px;color:#5e5e5e;transform-origin:0 0;transform:scaleX(0.9563);">Font</span>
<svg class="a" style="left:532px;top:257px;" width="7" height="7" viewBox="0 0 7 7"><path d="M0.5 6V0.5H6" fill="none" stroke="#8a8a8a"/><path d="M2.5 2.5L6.5 6.5M3.5 6.5H6.5V3.5" fill="none" stroke="#8a8a8a"/></svg>
<div class="a" style="left:543px;top:180px;width:1px;height:84px;background:#d5d5d5;"></div>
<svg class="a" style="left:551px;top:189px;" width="16" height="16" viewBox="0 0 16 16"><g fill="#b9b9b9"><circle cx="2" cy="2.5" r="1.5"/><circle cx="2" cy="8" r="1.5"/><circle cx="2" cy="13.5" r="1.5"/></g><path d="M6 2.5H14M6 8H14M6 13.5H14" stroke="#b9b9b9"/></svg>
<svg class="a" style="left:572px;top:196px;" width="5" height="3" viewBox="0 0 5 3"><path d="M0 0H5L2.5 3Z" fill="#c4c4c4"/></svg>
<svg class="a" style="left:585px;top:189px;" width="16" height="16" viewBox="0 0 16 16"><g font-size="5" fill="#b9b9b9" font-family="Liberation Sans"><text x="0" y="5">1</text><text x="0" y="10.5">2</text><text x="0" y="16">3</text></g><path d="M6 2.5H15M6 8H15M6 13.5H15" stroke="#b9b9b9"/></svg>
<svg class="a" style="left:606px;top:196px;" width="5" height="3" viewBox="0 0 5 3"><path d="M0 0H5L2.5 3Z" fill="#c4c4c4"/></svg>
<svg class="a" style="left:622px;top:192px;" width="16" height="11" viewBox="0 0 16 11"><path d="M7 0.5H16M7 3.5H16M7 6.5H16M7 9.5H16" stroke="#b9b9b9"/><path d="M0.5 5H6M3 2.5L0.5 5L3 7.5" fill="none" stroke="#b9b9b9"/></svg>
<svg class="a" style="left:644px;top:192px;" width="16" height="11" viewBox="0 0 16 11"><path d="M7 0.5H16M7 3.5H16M7 6.5H16M7 9.5H16" stroke="#b9b9b9"/><path d="M0.5 5H6M3.5 2.5L6 5L3.5 7.5" fill="none" stroke="#b9b9b9"/></svg>
<svg class="a" style="left:669px;top:190px;" width="16" height="16" viewBox="0 0 16 16"><path d="M7 3.5H16M7 6.5H16M7 9.5H16M7 12.5H16" stroke="#b9b9b9"/><path d="M3 1V15M0.5 3.5L3 1L5.5 3.5M0.5 12.5L3 15L5.5 12.5" fill="none" stroke="#b9b9b9"/></svg>
<svg class="a" style="left:690px;top:196px;" width="5" height="3" viewBox="0 0 5 3"><path d="M0 0H5L2.5 3Z" fill="#c4c4c4"/></svg>
<svg class="a" style="left:702px;top:183px;" width="16" height="16" viewBox="0 0 16 16"><path d="M1 1V15M4 1V15M7 8V15M10 8V15M13 8V15" stroke="#b9b9b9"/><text x="7" y="8" font-size="8" fill="#b9b9b9" font-family="Liberation Sans">A</text></svg>
<svg class="a" style="left:723px;top:189px;" width="5" height="3" viewBox="0 0 5 3"><path d="M0 0H5L2.5 3Z" fill="#c4c4c4"/></svg>
<svg class="a" style="left:702px;top:205px;" width="16" height="16" viewBox="0 0 16 16"><path d="M0.5 4V0.5H4M12 0.5H15.5V4M15.5 12V15.5H12M4 15.5H0.5V12" fill="none" stroke="#b9b9b9"/><path d="M8 2V6M6 4L8 2L10 4M8 10V14M6 12L8 14L10 12M3 8H13" fill="none" stroke="#b9b9b9"/></svg>
<svg class="a" style="left:723px;top:212px;" width="5" height="3" viewBox="0 0 5 3"><path d="M0 0H5L2.5 3Z" fill="#c4c4c4"/></svg>
<svg class="a" style="left:702px;top:227px;" width="17" height="17" viewBox="0 0 17 17"><path d="M2 0.5H11L14 5H5Z" fill="#b9b9b9"/><path d="M0 5H8V9H0Z" fill="#cfcfcf"/><rect x="5.5" y="6.5" width="11" height="10" fill="#f4f4f4" stroke="#b9b9b9"/><path d="M8 11.5H14" stroke="#b9b9b9"/></svg>
<svg class="a" style="left:723px;top:235px;" width="5" height="3" viewBox="0 0 5 3"><path d="M0 0H5L2.5 3Z" fill="#c4c4c4"/></svg>
<svg class="a" style="left:551px;top:224px;" width="15" height="13" viewBox="0 0 15 13"><path d="M0 0.5H14" stroke="#b9b9b9"/><path d="M0 3.5H9" stroke="#b9b9b9"/><path d="M0 6.5H14" stroke="#b9b9b9"/><path d="M0 9.5H9" stroke="#b9b9b9"/></svg>
<svg class="a" style="left:573.5px;top:224px;" width="15" height="13" viewBox="0 0 15 13"><path d="M0 0.5H14" stroke="#b9b9b9"/><path d="M2.5 3.5H11.5" stroke="#b9b9b9"/><path d="M0 6.5H14" stroke="#b9b9b9"/><path d="M2.5 9.5H11.5" stroke="#b9b9b9"/></svg>
<svg class="a" style="left:596px;top:224px;" width="15" height="13" viewBox="0 0 15 13"><path d="M0 0.5H14" stroke="#b9b9b9"/><path d="M5 3.5H14" stroke="#b9b9b9"/><path d="M0 6.5H14" stroke="#b9b9b9"/><path d="M5 9.5H14" stroke="#b9b9b9"/></svg>
<svg class="a" style="left:618px;top:224px;" width="15" height="13" viewBox="0 0 15 13"><path d="M0 0.5H14" stroke="#b9b9b9"/><path d="M0 3.5H14" stroke="#b9b9b9"/><path d="M0 6.5H14" stroke="#b9b9b9"/><path d="M0 9.5H14" stroke="#b9b9b9"/></svg>
<div class="a" style="left:640px;top:218px;width:1px;height:22px;background:#dedede;"></div>
<svg class="a" style="left:648px;top:223px;" width="14" height="12" viewBox="0 0 14 12"><path d="M0 0.5H6M0 3.5H6M0 6.5H6M0 9.5H6M8 0.5H14M8 3.5H14M8 6.5H14M8 9.5H14" stroke="#b9b9b9"/></svg>
<svg class="a" style="left:668px;top:228px;" width="5" height="3" viewBox="0 0 5 3"><path d="M0 0H5L2.5 3Z" fill="#c4c4c4"/></svg>
<span class="t" style="left:605.40px;top:254.30px;font-size:12px;color:#5e5e5e;transform-origin:0 0;transform:scaleX(0.9374);">Paragraph</span>
<svg class="a" style="left:725px;top:257px;" width="7" height="7" viewBox="0 0 7 7"><path d="M0.5 6V0.5H6" fill="none" stroke="#8a8a8a"/><path d="M2.5 2.5L6.5 6.5M3.5 6.5H6.5V3.5" fill="none" stroke="#8a8a8a"/></svg>
<div class="a" style="left:736px;top:180px;width:1px;height:84px;background:#d5d5d5;"></div>
<svg class="a" style="left:745px;top:181px;" width="34" height="34" viewBox="0 0 34 34"><g fill="none" stroke="#6a7a8c" stroke-width="1.1"><path d="M18.5 6.3A9.3 9.3 0 1 1 18.5 24"/></g><rect x="2.5" y="6.5" width="16" height="16" fill="#fafafa" stroke="#6a7a8c" stroke-width="1.1"/><path d="M16 13.5L25 22.5L16 31.5L7 22.5Z" fill="#fafafa" stroke="#6a7a8c" stroke-width="1.1"/></svg>
<span class="t" style="left:743.60px;top:219.70px;font-size:12px;color:#444444;transform-origin:0 0;transform:scaleX(0.8845);">Shapes</span>
<svg class="a" style="left:759px;top:239px;" width="5" height="3" viewBox="0 0 5 3"><path d="M0 0H5L2.5 3Z" fill="#6a6a6a"/></svg>
<svg class="a" style="left:791px;top:183px;" width="29" height="29" viewBox="0 0 29 29"><rect x="5.5" y="5" width="18.5" height="19" fill="#f0c06a"/><rect x="1.5" y="1.5" width="11" height="11" fill="#fff" stroke="#5a5a5a"/><rect x="16.5" y="16.5" width="11" height="11" fill="#fff" stroke="#5a5a5a"/></svg>
<span class="t" style="left:785.70px;top:219.70px;font-size:12px;color:#444444;transform-origin:0 0;transform:scaleX(0.9601);">Arrange</span>
<svg class="a" style="left:804px;top:239px;" width="5" height="3" viewBox="0 0 5 3"><path d="M0 0H5L2.5 3Z" fill="#6a6a6a"/></svg>
<svg class="a" style="left:837px;top:184px;" width="32" height="31" viewBox="0 0 32 31"><rect x="1.5" y="1.5" width="25" height="25" rx="5" fill="#f2eff6" stroke="#c9c9c9" stroke-width="1.3"/><path d="M9 29L29 8L31 10L13 30Z" fill="#b5b5b5"/><circle cx="11.5" cy="27" r="2.5" fill="#f2f2f2" stroke="#b0b0b0"/></svg>
<span class="t" style="left:836.50px;top:219.70px;font-size:12px;color:#a8a8a8;transform-origin:0 0;transform:scaleX(0.9629);">Quick</span>
<span class="t" style="left:832.40px;top:234.80px;font-size:12px;color:#a8a8a8;transform-origin:0 0;transform:scaleX(0.9181);">Styles</span>
<svg class="a" style="left:866px;top:240px;" width="5" height="3" viewBox="0 0 5 3"><path d="M0 0H5L2.5 3Z" fill="#c4c4c4"/></svg>
<svg class="a" style="left:876px;top:181px;" width="17" height="17" viewBox="0 0 17 17"><path d="M2 8.5L7.5 3L13 8.5L7.5 14Z" fill="#f7f7f7" stroke="#a8a8a8" stroke-width="1.1"/><path d="M5 1V6.5" stroke="#a8a8a8" stroke-width="1.1"/><path d="M4 1H6" stroke="#a8a8a8"/><path d="M13 8.5Q16 10 15.5 13" fill="none" stroke="#a8a8a8" stroke-width="1.3"/><ellipse cx="7" cy="15.5" rx="5" ry="1.3" fill="#e0e0e0"/></svg>
<span class="t" style="left:895.00px;top:185.20px;font-size:12px;color:#a8a8a8;transform-origin:0 0;transform:scaleX(0.9432);">Shape Fill</span>
<svg class="a" style="left:948px;top:190px;" width="5" height="3" viewBox="0 0 5 3"><path d="M0 0H5L2.5 3Z" fill="#c4c4c4"/></svg>
<svg class="a" style="left:877px;top:205px;" width="15" height="14" viewBox="0 0 15 14"><path d="M0.5 13.5V2.5H8M0.5 13.5H11.5V7" fill="none" stroke="#a8a8a8"/><path d="M6 10L13 2L15 4L8 12L5.5 12.5Z" fill="#f7f7f7" stroke="#a8a8a8"/></svg>
<span class="t" style="left:895.00px;top:207.70px;font-size:12px;color:#a8a8a8;transform-origin:0 0;transform:scaleX(0.9754);">Shape Outline</span>
<svg class="a" style="left:972px;top:213px;" width="5" height="3" viewBox="0 0 5 3"><path d="M0 0H5L2.5 3Z" fill="#c4c4c4"/></svg>
<svg class="a" style="left:876px;top:227px;" width="17" height="16" viewBox="0 0 17 16"><ellipse cx="8" cy="13" rx="7.5" ry="2.5" fill="#dcdcdc"/><path d="M1.5 10.5L6 3.5Q6.5 2.5 8 2.5H14.5Q15.5 2.5 15 3.5L10.5 10.5Q10 11.5 8.5 11.5H2.5Q1 11.5 1.5 10.5Z" fill="#f7f7f7" stroke="#a8a8a8" stroke-width="1.1"/></svg>
<span class="t" style="left:895.00px;top:231.40px;font-size:12px;color:#a8a8a8;transform-origin:0 0;transform:scaleX(0.9450);">Shape Effects</span>
<svg class="a" style="left:968px;top:236px;" width="5" height="3" viewBox="0 0 5 3"><path d="M0 0H5L2.5 3Z" fill="#c4c4c4"/></svg>
<span class="t" style="left:831.50px;top:254.30px;font-size:12px;color:#5e5e5e;transform-origin:0 0;transform:scaleX(0.9990);">Drawing</span>
<svg class="a" style="left:976px;top:257px;" width="7" height="7" viewBox="0 0 7 7"><path d="M0.5 6V0.5H6" fill="none" stroke="#8a8a8a"/><path d="M2.5 2.5L6.5 6.5M3.5 6.5H6.5V3.5" fill="none" stroke="#8a8a8a"/></svg>
<div class="a" style="left:986px;top:180px;width:1px;height:84px;background:#d5d5d5;"></div>
<svg class="a" style="left:994px;top:183px;" width="15" height="13" viewBox="0 0 15 13"><g fill="#5f5f5f"><rect x="0" y="6" width="6" height="7"/><rect x="9" y="6" width="6" height="7"/><rect x="1" y="2" width="4" height="5"/><rect x="10" y="2" width="4" height="5"/><rect x="5" y="6" width="5" height="3"/><rect x="1.5" y="0" width="3" height="2"/><rect x="10.5" y="0" width="3" height="2"/></g></svg>
<span class="t" style="left:1013.30px;top:185.00px;font-size:12px;color:#444444;transform-origin:0 0;transform:scaleX(0.9793);">Find</span>
<svg class="a" style="left:994px;top:205px;" width="17" height="16" viewBox="0 0 17 16"><text x="0" y="7" font-size="9" font-family="Liberation Sans" fill="#8a5aa8">ab</text><text x="5" y="15" font-size="9" font-family="Liberation Sans" fill="#3577b8">ac</text><path d="M1.5 9V12.5H4M2.5 11.2L4 12.5L2.5 13.8" fill="none" stroke="#555" stroke-width="0.9"/></svg>
<span class="t" style="left:1013.30px;top:207.90px;font-size:12px;color:#444444;transform-origin:0 0;transform:scaleX(0.9176);">Replace</span>
<svg class="a" style="left:1065px;top:213px;" width="5" height="3" viewBox="0 0 5 3"><path d="M0 0H5L2.5 3Z" fill="#6a6a6a"/></svg>
<svg class="a" style="left:997px;top:228px;" width="10" height="15" viewBox="0 0 10 15"><path d="M0.5 0.5V12L3.5 9L6 14.5L8 13.5L5.5 8.5H9.5Z" fill="#fff" stroke="#555"/></svg>
<span class="t" style="left:1013.30px;top:230.80px;font-size:12px;color:#444444;transform-origin:0 0;transform:scaleX(0.8995);">Select</span>
<svg class="a" style="left:1047px;top:236px;" width="5" height="3" viewBox="0 0 5 3"><path d="M0 0H5L2.5 3Z" fill="#6a6a6a"/></svg>
<span class="t" style="left:1014.40px;top:254.30px;font-size:12px;color:#5e5e5e;transform-origin:0 0;transform:scaleX(1.0023);">Editing</span>
<div class="a" style="left:1078px;top:180px;width:1px;height:84px;background:#d5d5d5;"></div>
<svg class="a" style="left:1107px;top:256px;" width="10" height="7" viewBox="0 0 10 7"><path d="M1 6L5 2L9 6" fill="none" stroke="#555" stroke-width="1.6"/></svg>
<div class="a" style="left:103px;top:268px;width:1023px;height:354px;background:#dfdfdf;"></div>
<div class="a" style="left:259px;top:271px;width:1px;height:350px;background:#c8c8c8;"></div>
<div class="a" style="left:127px;top:285px;width:114px;height:67px;background:#d5755c;"></div>
<div class="a" style="left:130px;top:288px;width:108px;height:61px;background:#ffffff;"></div>
<span class="t" style="left:116.00px;top:287.00px;font-size:12px;color:#c0573b;transform-origin:0 0;transform:scaleX(0.7857);">1</span>
<div class="a" style="left:390px;top:277px;width:590px;height:333px;background:#d2d2d2;"></div>
<div class="a" style="left:391px;top:278px;width:588px;height:331px;background:#ffffff;"></div>
<div class="a" style="left:260px;top:620px;width:866px;height:1px;background:#cfcfcf;"></div>
<svg class="a" style="left:465px;top:332px;" width="444" height="118" viewBox="0 0 444 118"><rect x="0.5" y="0.5" width="443" height="117" fill="none" stroke="#6a6a6a" stroke-dasharray="2 1.6"/></svg>
<svg class="a" style="left:465px;top:452px;" width="444" height="83" viewBox="0 0 444 83"><rect x="0.5" y="0.5" width="443" height="82" fill="none" stroke="#6a6a6a" stroke-dasharray="2 1.6"/></svg>
<span class="t" style="left:566.51px;top:407.00px;font-size:34px;color:#1e1e1e;transform-origin:0 0;transform:scaleX(0.9871);-webkit-text-stroke:0.7px #ffffff">Click to add title</span>
<span class="t" style="left:627.00px;top:455.50px;font-size:13px;color:#2a2a2a;transform-origin:0 0;transform:scaleX(1.0312);">Click to add subtitle</span>
<div class="a" style="left:103px;top:622px;width:1023px;height:23px;background:#f1f1f1;"></div>
<div class="a" style="left:103px;top:622px;width:1023px;height:1px;background:#d8d8d8;"></div>
<span class="t" style="left:110.00px;top:628.80px;font-size:12px;color:#505050;transform-origin:0 0;transform:scaleX(0.9326);">Slide 1 of 1</span>
<span class="t" style="left:186.20px;top:628.80px;font-size:12px;color:#505050;transform-origin:0 0;transform:scaleX(0.9403);">English (United States)</span>
<svg class="a" style="left:607px;top:628px;" width="11" height="13" viewBox="0 0 11 13"><path d="M5.5 0.5L9.5 4.5H1.5Z" fill="#f8f8f8"/><path d="M0 7H11M0 9.5H11M0 12H11" stroke="#fafafa"/></svg>
<span class="t" style="left:623.40px;top:628.80px;font-size:12px;color:#505050;transform-origin:0 0;transform:scaleX(0.9251);">Notes</span>
<svg class="a" style="left:674px;top:628px;" width="12" height="12" viewBox="0 0 12 12"><path d="M0.5 0.5H11.5V8.5H5L2 11.5V8.5H0.5Z" fill="#fafafa"/></svg>
<span class="t" style="left:690.00px;top:628.80px;font-size:12px;color:#505050;transform-origin:0 0;transform:scaleX(0.9222);">Comments</span>
<div class="a" style="left:763px;top:623px;width:38px;height:22px;background:#cbcbcb;"></div>
<svg class="a" style="left:775px;top:628px;" width="14" height="13" viewBox="0 0 14 13"><rect x="0.5" y="0.5" width="13" height="12" fill="none" stroke="#555"/><path d="M3.5 0.5V12.5" stroke="#555"/><rect x="5.5" y="3.5" width="5" height="4" fill="none" stroke="#555"/><path d="M5 10H11" stroke="#555"/></svg>
<svg class="a" style="left:813px;top:628px;" width="14" height="13" viewBox="0 0 14 13"><g fill="none" stroke="#555"><rect x="0.5" y="0.5" width="5" height="4.5"/><rect x="8.5" y="0.5" width="5" height="4.5"/><rect x="0.5" y="7.5" width="5" height="4.5"/><rect x="8.5" y="7.5" width="5" height="4.5"/></g></svg>
<svg class="a" style="left:851px;top:628px;" width="13" height="13" viewBox="0 0 13 13"><g fill="none" stroke="#555"><path d="M0.5 1.5H6.5V12.5H0.5ZM6.5 1.5H12.5V12.5H6.5Z"/><path d="M2 4H5M2 6H5M2 8H5M8 4H11M8 6H11M8 8H11" stroke-width="0.8"/></g></svg>
<svg class="a" style="left:889px;top:627px;" width="14" height="14" viewBox="0 0 14 14"><g fill="none" stroke="#555"><path d="M0 1.5H14"/><rect x="1.5" y="2.5" width="11" height="6"/><path d="M7 8.5V12.5M4 13H10"/></g><path d="M3 5H11" stroke="#555"/></svg>
<div class="a" style="left:920px;top:634px;width:6px;height:2px;background:#555;"></div>
<div class="a" style="left:929px;top:634px;width:101px;height:1px;background:#6a6a6a;"></div>
<div class="a" style="left:950px;top:629px;width:5px;height:12px;background:#555;"></div>
<div class="a" style="left:980px;top:631px;width:1px;height:7px;background:#555;"></div>
<svg class="a" style="left:1034px;top:629px;" width="9" height="9" viewBox="0 0 9 9"><path d="M4.5 0V9M0 4.5H9" stroke="#555" stroke-width="2"/></svg>
<span class="t" style="left:1057.00px;top:629.40px;font-size:12px;color:#505050;transform-origin:0 0;transform:scaleX(0.8489);">46 %</span>
<svg class="a" style="left:1095px;top:629px;" width="13" height="13" viewBox="0 0 13 13"><rect x="0.5" y="0.5" width="12" height="12" fill="none" stroke="#666"/><path d="M6.5 2V5M5 3.5L6.5 2L8 3.5M6.5 11V8M5 9.5L6.5 11L8 9.5M2 6.5H5M3.5 5L2 6.5L3.5 8M11 6.5H8M9.5 5L11 6.5L9.5 8" fill="none" stroke="#666" stroke-width="0.8"/></svg>
<div class="a" style="left:1127px;top:227px;width:3px;height:14px;background:#5a4a48;"></div>
<div class="a" style="left:1127px;top:572px;width:3px;height:14px;background:#5a4a48;"></div>
<div class="a" style="left:1127px;top:605px;width:4px;height:1px;background:#cfcfcf;"></div>
</body></html>
